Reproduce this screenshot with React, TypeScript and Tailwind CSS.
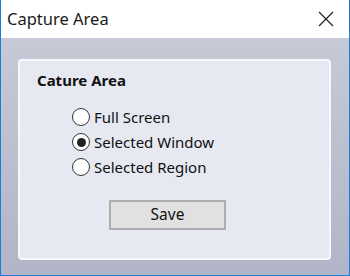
const options = [
  { label: 'Full Screen', checked: false },
  { label: 'Selected Window', checked: true },
  { label: 'Selected Region', checked: false },
]

function Radio({ checked }: { checked: boolean }) {
  return (
    <span className="w-[18px] h-[18px] rounded-full border border-[#333] bg-white flex items-center justify-center shrink-0">
      {checked && <span className="w-[9px] h-[9px] rounded-full bg-[#222]" />}
    </span>
  )
}

export default function App() {
  return (
    <div
      className="w-[350px] h-[276px] flex flex-col border-x border-b border-[#1a7fd8] text-[#111]"
      style={{ fontFamily: '"Noto Sans", "Open Sans", sans-serif' }}
    >
      <div className="h-[38px] bg-white flex items-center justify-between pl-[6px] pr-[15px] shrink-0">
        <span className="text-[16.5px] text-[#1a1a1a]">Capture Area</span>
        <svg width="16" height="16" viewBox="0 0 16 16" className="text-[#222]">
          <path d="M1 1L15 15M15 1L1 15" stroke="currentColor" strokeWidth="1.2" fill="none" />
        </svg>
      </div>
      <div className="flex-1 bg-gradient-to-b from-[#c6c9d6] to-[#b2b5c7] pl-[17px] pr-[18px] pt-[21px] pb-[15px] flex">
        <div className="flex-1 rounded-[4px] border-2 border-[#f7f8fb] bg-[#e6e9f1] flex flex-col pl-[17px] pt-[8px]">
          <div className="text-[15px] font-bold leading-[22px]">Cature Area</div>
          <div className="flex flex-col pl-[35px] pt-[17px] gap-[7px]">
            {options.map((o) => (
              <label key={o.label} className="flex items-center gap-[4px] h-[18px] text-[15px]">
                <Radio checked={o.checked} />
                <span>{o.label}</span>
              </label>
            ))}
          </div>
          <div className="pl-[72px] pt-[24px]">
            <button className="w-[117px] h-[30px] bg-[#e1e1e1] border-2 border-[#adadad] text-[15.5px] flex items-center justify-center">
              Save
            </button>
          </div>
        </div>
      </div>
    </div>
  )
}
